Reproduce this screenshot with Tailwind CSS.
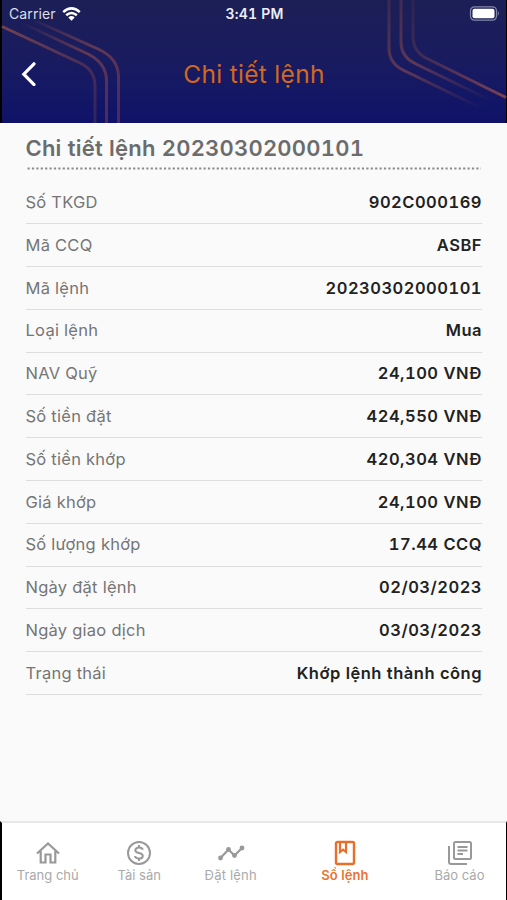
<!DOCTYPE html>
<html lang="vi">
<head>
    <meta charset="UTF-8">
    <meta name="viewport" content="width=device-width, initial-scale=1.0">
    <title>Chi tiết lệnh</title>
    <script src="https://cdn.jsdelivr.net/npm/@tailwindcss/browser@4"></script>
</head>
<body class="bg-[#fafafa] font-['Inter',sans-serif]">
    <div class="flex h-[900px] w-[507px] flex-col overflow-hidden">

        <!-- Header -->
        <header class="relative h-[123px] shrink-0 border-r border-l-2 border-black bg-linear-to-b from-[#1c1f55] via-[#191b60] to-[#0f1268]">
            <svg class="absolute top-0 -left-0.5 h-[123px] w-[507px]" viewBox="0 0 507 123" fill="none" stroke-width="3">
                <defs>
                    <linearGradient id="l1" gradientUnits="userSpaceOnUse" x1="2" y1="26" x2="96" y2="123">
                        <stop offset="0" stop-color="#734150"/>
                        <stop offset=".6" stop-color="#4d2f56"/>
                        <stop offset="1" stop-color="#2f2360"/>
                    </linearGradient>
                    <linearGradient id="l2" gradientUnits="userSpaceOnUse" x1="22" y1="22" x2="106" y2="123">
                        <stop offset="0" stop-color="#734150" stop-opacity="0"/>
                        <stop offset=".5" stop-color="#643852"/>
                        <stop offset="1" stop-color="#4d2a5c"/>
                    </linearGradient>
                    <linearGradient id="r1" gradientUnits="userSpaceOnUse" x1="389" y1="0" x2="481" y2="108">
                        <stop offset="0" stop-color="#3a2853"/>
                        <stop offset=".45" stop-color="#603854"/>
                        <stop offset="1" stop-color="#603854" stop-opacity="0"/>
                    </linearGradient>
                    <linearGradient id="r3" gradientUnits="userSpaceOnUse" x1="413" y1="0" x2="505" y2="97">
                        <stop offset="0" stop-color="#2a2454"/>
                        <stop offset=".5" stop-color="#4b3058"/>
                        <stop offset="1" stop-color="#7c4054"/>
                    </linearGradient>
                </defs>
                <path stroke="url(#l1)" d="M2 26.500 80 63Q95 70 95 86V123"/>
                <path stroke="url(#l2)" d="M22 23 88 54Q106 63 106.500 80V123"/>
                <path stroke="url(#l2)" d="M36 21 98 49Q118 58 118.500 76V123"/>
                <path stroke="url(#r1)" d="M389 0V48Q389 63 403 70L481 108"/>
                <path stroke="url(#r1)" d="M401 0V42Q401 57 416 64L494 102"/>
                <path stroke="url(#r3)" d="M413 0V36Q413 51 426 58L506 97.500"/>
            </svg>

            <!-- Status bar -->
            <div class="relative grid h-[27px] grid-cols-3 items-center pr-1.5 pl-[7px] text-[14px] text-[#dcdeea]">
                <div class="flex items-center gap-1.5">
                    <span class="tracking-[0.1px]">Carrier</span>
                    <svg class="h-[14px] w-[19px]" viewBox="0 0 19 14" fill="none" stroke="#fff" stroke-width="2.500">
                        <path d="M1.200 5.200Q9.500-2.400 17.800 5.200M4.200 8.300Q9.500 3.600 14.800 8.300"/>
                        <path fill="#fff" stroke="none" d="M6.300 10.400Q9.500 7.800 12.700 10.400L9.500 13.700Z"/>
                    </svg>
                </div>
                <span class="text-center font-semibold tracking-[0.2px] whitespace-nowrap text-[#eceef5] tabular-nums">3:41 PM</span>
                <svg class="h-[15px] w-[31px] justify-self-end" viewBox="0 0 31 15">
                    <rect x="1.500" y=".8" width="26" height="13.400" rx="4" fill="none" stroke="#8486ab" stroke-width="1.200"/>
                    <rect x="3.500" y="2.800" width="22" height="9.400" rx="2" fill="#fff"/>
                    <path fill="#8486ab" d="M28.800 5Q31 7.500 28.800 10Z"/>
                </svg>
            </div>

            <!-- Title -->
            <div class="relative grid h-[94px] grid-cols-[48px_1fr_48px] items-center">
                <svg class="ml-[19px] h-6 w-4" viewBox="0 0 16 24" fill="none" stroke="#fff" stroke-width="3.200" stroke-linecap="round">
                    <path d="M13 1.800 2.800 12.200 13 22.600"/>
                </svg>
                <h1 class="text-center text-[24.5px] tracking-[0.3px] text-[#d2691e]">Chi tiết lệnh</h1>
            </div>
        </header>

        <!-- Order details -->
        <main class="flex-1 pt-[10px] pr-[25px] pl-[25.5px]">
            <h2 class="text-[22px]/[30px] font-semibold tracking-[0.22px] text-[#6c6c6c] tabular-nums">Chi tiết lệnh 20230302000101</h2>
            <svg class="mt-1 block h-[3px] w-[456px]" viewBox="0 0 456 3">
                <path d="M1.500 1.500H455" stroke="#8c8c8c" stroke-width="2.200" stroke-dasharray="2.200 2.200"/>
            </svg>
            <dl id="details" class="pt-[11.5px]"></dl>
        </main>

        <!-- Bottom navigation -->
        <nav class="flex h-[79px] shrink-0 border-t-2 border-r border-l-2 border-t-[#e7e7e7] border-r-black border-l-black bg-white pt-[17px] text-[13px]/[16px] text-[#a9a9a9]">
            <a class="flex w-[91.5px] flex-col items-center gap-px">
                <svg class="h-[26px] w-[26px]" viewBox="0 0 26 26" fill="none" stroke="#999" stroke-width="2.200">
                    <path d="M2 13.500 13 3.500 24 13.500M5.700 11V22.500H10.500V14.500H15.500V22.500H20.300V11"/>
                </svg>
                <span>Trang chủ</span>
            </a>
            <a class="flex w-[91.5px] flex-col items-center gap-px">
                <svg class="h-[26px] w-[26px]" viewBox="0 0 26 26" fill="none" stroke="#999" stroke-width="2">
                    <circle cx="13" cy="13" r="11"/>
                    <path d="M16.800 9.800Q16.200 7.500 13 7.500T9.300 10.200Q9.300 12.200 13 13T16.800 15.900Q16.800 18.500 13 18.500T9.100 16M13 5V8M13 18V21"/>
                </svg>
                <span>Tài sản</span>
            </a>
            <a class="flex w-[91.5px] flex-col items-center gap-px">
                <svg class="h-[26px] w-[28px]" viewBox="0 0 28 26" fill="#999">
                    <path d="M3.500 18 11.500 9.500 17.500 15.500 25 8" fill="none" stroke="#999" stroke-width="2.200"/>
                    <circle cx="3.500" cy="18" r="2.400"/>
                    <circle cx="11.500" cy="9.500" r="2.400"/>
                    <circle cx="17.500" cy="15.500" r="2.400"/>
                    <circle cx="25" cy="8" r="2.400"/>
                </svg>
                <span class="tracking-[0.2px]">Đặt lệnh</span>
            </a>
            <a class="flex w-[137px] flex-col items-center gap-px font-semibold text-[#ea7431]">
                <svg class="h-[26px] w-[26px]" viewBox="0 0 26 26" fill="none" stroke="#e86f29" stroke-width="2.400">
                    <rect x="4" y="2" width="18" height="22" rx="1.500"/>
                    <path d="M8 2V12L11 9.700 14 12V2" stroke-width="2.200"/>
                </svg>
                <span class="tracking-[0.1px]">Sổ lệnh</span>
            </a>
            <a class="flex w-[92px] flex-col items-center gap-px">
                <svg class="h-[26px] w-[26px]" viewBox="0 0 26 26" fill="none" stroke="#999" stroke-width="2">
                    <rect x="7" y="2" width="17" height="17" rx="1.500"/>
                    <path d="M2 6V22Q2 24 4 24H20M10.500 7H20.500M10.500 10.500H20.500M10.500 14H16"/>
                </svg>
                <span>Báo cáo</span>
            </a>
        </nav>
    </div>

    <script>
        const details = [
            { label: "Số TKGD", value: "902C000169" },
            { label: "Mã CCQ", value: "ASBF" },
            { label: "Mã lệnh", value: "20230302000101" },
            { label: "Loại lệnh", value: "Mua" },
            { label: "NAV Quỹ", value: "24,100 VNĐ" },
            { label: "Số tiền đặt", value: "424,550 VNĐ" },
            { label: "Số tiền khớp", value: "420,304 VNĐ" },
            { label: "Giá khớp", value: "24,100 VNĐ" },
            { label: "Số lượng khớp", value: "17.44 CCQ" },
            { label: "Ngày đặt lệnh", value: "02/03/2023" },
            { label: "Ngày giao dịch", value: "03/03/2023" },
            { label: "Trạng thái", value: "Khớp lệnh thành công" },
        ]

        const list = document.getElementById("details")
        details.forEach(item => {
            const row = document.createElement("div")
            row.className = "flex h-[42.8px] items-center justify-between border-b border-[#dedede] text-[16.5px]"
            const dt = document.createElement("dt")
            dt.className = "tracking-[0.25px] text-[#757575]"
            dt.textContent = item.label
            const dd = document.createElement("dd")
            dd.className = "font-semibold tracking-[0.5px] text-[#222] tabular-nums"
            dd.textContent = item.value
            row.append(dt, dd)
            list.appendChild(row)
        })
    </script>
</body>
</html>
